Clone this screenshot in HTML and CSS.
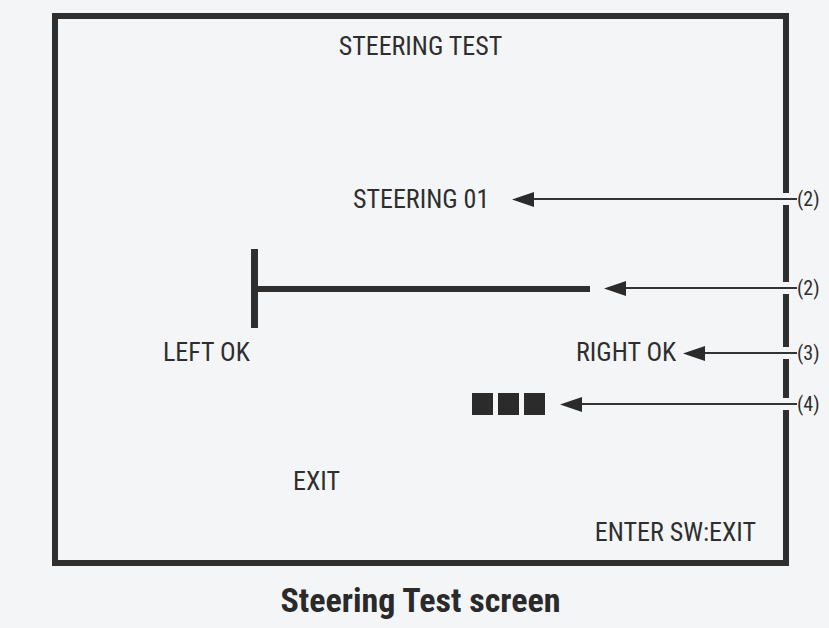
FILE: index.html
```html
<!DOCTYPE html>
<html>
<head>
<meta charset="utf-8">
<title>Steering Test screen</title>
<link rel="stylesheet" href="styles.css">
</head>
<body>
<div class="figure">
  <div class="screen">
    <div class="title">STEERING TEST</div>
    <div class="row steer">STEERING 01</div>
    <div class="gauge"><div class="gauge-stop"></div><div class="gauge-bar"></div></div>
    <div class="row ok"><span class="left-ok">LEFT OK</span><span class="right-ok">RIGHT OK</span></div>
    <div class="blocks"><i></i><i></i><i></i></div>
    <div class="row exit">EXIT</div>
    <div class="row enter">ENTER SW:EXIT</div>
  </div>

  <div class="callout c1">
    <svg class="head" width="22" height="15" viewBox="0 0 22 15"><polygon points="0,7.5 22,0 22,15"/></svg>
    <span class="line"></span>
    <span class="label">(2)</span>
  </div>
  <div class="callout c2">
    <svg class="head" width="22" height="15" viewBox="0 0 22 15"><polygon points="0,7.5 22,0 22,15"/></svg>
    <span class="line"></span>
    <span class="label">(2)</span>
  </div>
  <div class="callout c3">
    <svg class="head" width="22" height="15" viewBox="0 0 22 15"><polygon points="0,7.5 22,0 22,15"/></svg>
    <span class="line"></span>
    <span class="label">(3)</span>
  </div>
  <div class="callout c4">
    <svg class="head" width="22" height="15" viewBox="0 0 22 15"><polygon points="0,7.5 22,0 22,15"/></svg>
    <span class="line"></span>
    <span class="label">(4)</span>
  </div>

  <div class="caption">Steering Test screen</div>
</div>
</body>
</html>
```

FILE: styles.css
```css
html, body {
  margin: 0;
  padding: 0;
  background: #f4f5f7;
}

.figure {
  position: relative;
  width: 829px;
  height: 628px;
  overflow: hidden;
  padding-top: 13px;
  box-sizing: border-box;
  font-family: "Liberation Sans Narrow", "Roboto Condensed", "DejaVu Sans Condensed", "Liberation Sans", sans-serif;
  color: #2e2e2e;
}

.screen {
  margin-left: 52px;
  width: 737px;
  height: 553px;
  box-sizing: border-box;
  border: 6px solid #2f2f2f;
  display: flex;
  flex-direction: column;
  font-size: 26px;
  line-height: 25px;
}

.title {
  margin-top: 15px;
  text-align: center;
}

.row {
  height: 25px;
}

.steer {
  margin-top: 128px;
  padding-left: 295px;
}

.gauge {
  margin-top: 37px;
  margin-left: 193px;
  height: 79px;
  display: flex;
  align-items: center;
}

.gauge-stop {
  width: 7px;
  height: 79px;
  background: #2f2f2f;
}

.gauge-bar {
  width: 332px;
  height: 6px;
  background: #2f2f2f;
}

.ok {
  margin-top: 12px;
  padding-left: 105px;
  display: grid;
  grid-template-columns: 413px auto;
}

.blocks {
  margin-top: 28px;
  margin-left: 414px;
  display: flex;
  gap: 5px;
}

.blocks i {
  display: block;
  width: 21px;
  height: 22px;
  background: #2b2b2b;
}

.exit {
  margin-top: 54px;
  padding-left: 235px;
}

.enter {
  margin-top: 26px;
  text-align: right;
  padding-right: 27px;
}

/* callouts overlay the screen border */
.callout {
  position: absolute;
  right: 6px;
  height: 16px;
  display: flex;
  align-items: center;
}

.c1 { left: 512px; top: 191px; }
.c2 { left: 604px; top: 280px; }
.c3 { left: 683px; top: 345px; }
.c4 { left: 560px; top: 396px; }

.head {
  display: block;
  flex: none;
  fill: #2b2b2b;
}

.line {
  flex: 1;
  height: 2px;
  background: #333;
  position: relative;
  z-index: 1;
}

.label {
  flex: none;
  width: 26px;
  position: relative;
  font-size: 20px;
  line-height: 16px;
}

.label::before {
  content: "";
  position: absolute;
  left: -16px;
  top: 2px;
  width: 10px;
  height: 12px;
  background: #f4f5f7;
}

.caption {
  margin-top: 17px;
  margin-left: 52px;
  width: 737px;
  text-align: center;
  font-family: "Roboto Condensed", "Liberation Sans Narrow", "Liberation Sans", sans-serif;
  font-weight: bold;
  font-size: 34px;
  line-height: 34px;
  color: #2a2a2a;
}
```
